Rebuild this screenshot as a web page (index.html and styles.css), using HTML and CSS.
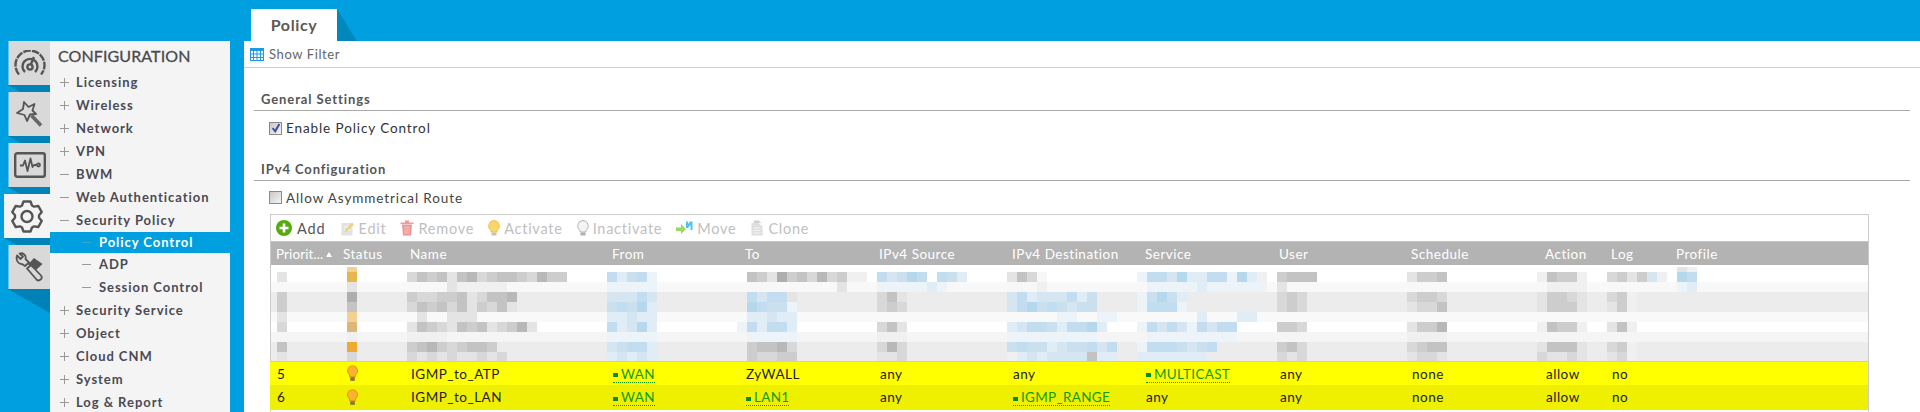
FILE: index.html
```html
<!DOCTYPE html>
<html lang="en">
<head>
<meta charset="utf-8">
<title>Policy Control</title>
<link rel="stylesheet" href="styles.css">
</head>
<body>
<div class="app">
  <header class="topbar">
    <div class="tab">Policy</div>
  </header>
  <div class="body">
    <aside class="rail">
      <div class="rail-item">
        <svg class="ic-gauge" viewBox="0 0 32 26"><path class="ln" d="M5 24.500A14.500 14.500 0 1 1 27 24.500" stroke-dasharray="7.600 1.100"/><path class="ln" d="M11 22A7.500 7.500 0 1 1 21 22"/><circle class="ln" cx="16" cy="17" r="2.600"/><path class="ln" d="M17 14L20 7"/></svg>
      </div>
      <div class="rail-item">
        <svg class="ic-wand" viewBox="0 0 27 27"><path class="ln thin" d="M8 1L12.500 6L18.500 3L16.500 9.500L20 13L14 13.500L11 20L8.500 14L1 12L7 8Z"/><path class="ln thick" d="M15.500 14.500L25 24.500"/></svg>
      </div>
      <div class="rail-item">
        <svg class="ic-mon" viewBox="0 0 32 26"><rect class="ln" x="1.200" y="1.200" width="29.600" height="23.600" rx="2"/><path class="ln thin" d="M6 13.500H9L11 8.500L13.500 19L16.500 6.500L18.500 15L20 13H23"/><circle class="ln thin" cx="24.500" cy="13" r="1.500"/></svg>
      </div>
      <div class="rail-item active">
        <svg class="ic-gear" viewBox="-1 -1 32 33"><path class="ln" d="M11.500 .5L18.500 .5L20 4.500L22.030 5.670L26.250 4.970L29.750 11.030L27.030 14.330L27.030 16.670L29.750 19.970L26.250 26.030L22.030 25.330L20 26.500L18.500 30.500L11.500 30.500L10 26.500L7.970 25.330L3.750 26.030L.25 19.970L2.970 16.670L2.970 14.330L.25 11.030L3.750 4.970L7.970 5.670L10 4.500Z"/><circle class="ln" cx="15" cy="15.500" r="5.500"/></svg>
      </div>
      <div class="rail-item">
        <svg class="ic-tools" viewBox="0 0 29 30"><path class="ln thin" d="M2 3.500L5.500 7L8 4.500L4.500 1.500C8 .5 11.500 3 10.500 7L14 10.500L10 14L7 12C3.500 12.500 .5 8 2 3.500Z"/><path class="fill-dark" d="M13 12.500L19 6L27.500 12L21 18Z"/><path class="ln thin" d="M12 16.500L16 13L26 23.500C28.500 26.500 24 30 21.500 27.500Z"/></svg>
      </div>
    </aside>

    <nav class="nav">
      <div class="nav-title">CONFIGURATION</div>
      <ul class="menu">
        <li class="row"><span class="sign plus"></span>Licensing</li>
        <li class="row"><span class="sign plus"></span>Wireless</li>
        <li class="row"><span class="sign plus"></span>Network</li>
        <li class="row"><span class="sign plus"></span>VPN</li>
        <li class="row"><span class="sign"></span>BWM</li>
        <li class="row"><span class="sign"></span>Web Authentication</li>
        <li class="row"><span class="sign"></span>Security Policy</li>
        <li class="row sub selected"><span class="sign"></span>Policy Control</li>
        <li class="row sub"><span class="sign"></span>ADP</li>
        <li class="row sub"><span class="sign"></span>Session Control</li>
        <li class="row"><span class="sign plus"></span>Security Service</li>
        <li class="row"><span class="sign plus"></span>Object</li>
        <li class="row"><span class="sign plus"></span>Cloud CNM</li>
        <li class="row"><span class="sign plus"></span>System</li>
        <li class="row"><span class="sign plus"></span>Log &amp; Report</li>
      </ul>
    </nav>

    <main class="main">
      <div class="filter-bar">
        <svg class="ic-filter" viewBox="0 0 14 13"><rect x="0.500" y="0.500" width="13" height="12" fill="#fff" stroke="#1d9be0"/><rect x="0" y="0" width="14" height="3" fill="#1d9be0"/><path d="M3.500 3V13M7 3V13M10.500 3V13M0 6H14M0 9.500H14" stroke="#1d9be0"/></svg>
        <span>Show Filter</span>
      </div>

      <section class="section">
        <h3 class="sec-head">General Settings</h3>
        <label class="check-row"><span class="check on"><svg viewBox="0 0 9 9"><path d="M1.500 4.500L3.800 7.500L7.500 1" fill="none" stroke="#3c4fa0" stroke-width="1.800"/></svg></span>Enable Policy Control</label>
      </section>

      <section class="section second">
        <h3 class="sec-head">IPv4 Configuration</h3>
        <label class="check-row short"><span class="check"></span>Allow Asymmetrical Route</label>

        <div class="table-box">
          <div class="toolbar">
            <span class="tool live"><svg class="t-ic" viewBox="0 0 16 16"><circle cx="8" cy="8" r="8" fill="#55ab0e"/><path d="M8 3.500V12.500M3.500 8H12.500" stroke="#fff" stroke-width="2.600"/></svg>Add</span>
            <span class="tool"><svg class="t-ic" viewBox="0 0 14 16"><rect x="0.500" y="3" width="11" height="12.500" fill="#e2e2e2"/><path d="M3 7H9M3 10H9" stroke="#fff"/><path d="M4 10L11 2.500L13 4.500L6 11.500L3.500 12Z" fill="#f1d27a"/></svg>Edit</span>
            <span class="tool"><svg class="t-ic" viewBox="0 0 13 16"><path d="M0 2.500H13V4H0ZM4.500 .5H8.500V2.500H4.500Z" fill="#ee9a9a"/><path d="M1.500 4.500H11.500L10.500 15.500H2.500Z" fill="#f09292"/><path d="M4.500 6V14M6.500 6V14M8.500 6V14" stroke="#f9c4c4"/></svg>Remove</span>
            <span class="tool"><svg class="t-ic bulb" viewBox="0 0 12 17"><path d="M6 .5A5.500 5.500 0 0 1 9 10.500V12H3V10.500A5.500 5.500 0 0 1 6 .5Z" fill="#fbd76b" stroke="#f3bf45"/><rect x="3.500" y="12.500" width="5" height="3" fill="#c4c4b0"/></svg>Activate</span>
            <span class="tool"><svg class="t-ic bulb" viewBox="0 0 12 17"><path d="M6 .5A5.500 5.500 0 0 1 9 10.500V12H3V10.500A5.500 5.500 0 0 1 6 .5Z" fill="#f3f3f3" stroke="#b5b5b5"/><rect x="3.500" y="12.500" width="5" height="3" fill="#b0b0b0"/></svg>Inactivate</span>
            <span class="tool"><svg class="t-ic wide" viewBox="0 0 17 14"><path d="M0 6.500H5V3L10 8L5 13V10H0Z" fill="#9ad765"/><path d="M10 .5H12V3L14 .5H16.500V9H14.500V4L12 7H10Z" fill="#4cc3f5"/></svg>Move</span>
            <span class="tool"><svg class="t-ic" viewBox="0 0 13 16"><path d="M1 3H8L12 6.500V15.500H1Z" fill="#dedede"/><path d="M3.500 .5H8L11 3H3.500Z" fill="#cfcfcf"/><path d="M3 8H10M3 10.500H10M3 13H10" stroke="#f5f5f5"/></svg>Clone</span>
          </div>

          <div class="cols thead">
            <span class="cell"><span class="trim">Priorit...</span><i class="sort"></i></span>
            <span class="cell">Status</span>
            <span class="cell">Name</span>
            <span class="cell">From</span>
            <span class="cell">To</span>
            <span class="cell">IPv4 Source</span>
            <span class="cell">IPv4 Destination</span>
            <span class="cell">Service</span>
            <span class="cell">User</span>
            <span class="cell">Schedule</span>
            <span class="cell">Action</span>
            <span class="cell">Log</span>
            <span class="cell">Profile</span>
          </div>

          <div id="blurred" class="blurred"></div>

          <div class="cols trow hl1">
            <span class="cell">5</span>
            <span class="cell"><svg class="lamp" viewBox="0 0 12 18"><path d="M6 .5A5.500 5.500 0 0 1 9.200 10.500V12.500H2.800V10.500A5.500 5.500 0 0 1 6 .5Z" fill="#fbb32c" stroke="#f08a12"/><rect x="3.500" y="13" width="5" height="4" fill="#7c7a3c"/></svg></span>
            <span class="cell">IGMP_to_ATP</span>
            <span class="cell"><a class="obj"><i class="obj-ic"></i>WAN</a></span>
            <span class="cell">ZyWALL</span>
            <span class="cell">any</span>
            <span class="cell">any</span>
            <span class="cell"><a class="obj"><i class="obj-ic"></i>MULTICAST</a></span>
            <span class="cell">any</span>
            <span class="cell">none</span>
            <span class="cell">allow</span>
            <span class="cell">no</span>
            <span class="cell"></span>
          </div>
          <div class="cols trow hl2">
            <span class="cell">6</span>
            <span class="cell"><svg class="lamp" viewBox="0 0 12 18"><path d="M6 .5A5.500 5.500 0 0 1 9.200 10.500V12.500H2.800V10.500A5.500 5.500 0 0 1 6 .5Z" fill="#fbb32c" stroke="#f08a12"/><rect x="3.500" y="13" width="5" height="4" fill="#7c7a3c"/></svg></span>
            <span class="cell">IGMP_to_LAN</span>
            <span class="cell"><a class="obj"><i class="obj-ic"></i>WAN</a></span>
            <span class="cell"><a class="obj"><i class="obj-ic"></i>LAN1</a></span>
            <span class="cell">any</span>
            <span class="cell"><a class="obj"><i class="obj-ic"></i>IGMP_RANGE</a></span>
            <span class="cell">any</span>
            <span class="cell">any</span>
            <span class="cell">none</span>
            <span class="cell">allow</span>
            <span class="cell">no</span>
            <span class="cell"></span>
          </div>
        </div>
      </section>
    </main>
  </div>
</div>
<script src="mosaic.js"></script>
</body>
</html>
```
FILE: styles.css
```css
* { box-sizing: border-box; }
html, body { margin: 0; padding: 0; height: 412px; overflow: hidden; }
body {
  background: #009fdf;
  font-family: Lato, "Open Sans", sans-serif;
  font-size: 14px;
  color: #333;
}
.app { width: 1920px; height: 412px; overflow: hidden; }

/* top */
.topbar { height: 41px; padding: 9px 0 0 251px; }
.tab {
  position: relative;
  width: 86px; height: 32px;
  background: #fff;
  color: #60584f;
  font-size: 16px; font-weight: 700;
  letter-spacing: .6px;
  line-height: 31px;
  text-align: center;
}
.tab::after {
  content: "";
  position: absolute; left: 100%; top: 0;
  width: 20px; height: 32px;
  background: #0088bd;
  clip-path: polygon(0 0, 100% 100%, 0 100%);
}

.body { display: flex; height: 371px; }

/* icon rail */
.rail { width: 50px; flex: none; }
.rail-item {
  position: relative;
  margin: 0 0 7px 8px;
  width: 42px; height: 44px;
  background: #d9d9d9;
  border-left: 1px solid #66bfe8;
  display: flex; align-items: center; justify-content: center;
}
.rail-item::after {
  content: "";
  position: absolute; left: -1px; top: 100%;
  width: 42px; height: 24px;
  background: #0082b8;
  clip-path: polygon(0 0, 100% 0, 100% 100%);
  z-index: 0;
}
.rail-item + .rail-item { z-index: 1; }
.rail-item.active {
  width: 46px; margin-left: 4px;
  background: #f4f4f4;
  border-left: 0;
}
.rail-item.active::after { left: 0; width: 46px; }
.rail-item svg { display: block; }
.ln { fill: none; stroke: #555; stroke-width: 2.4; stroke-linejoin: round; }
.ln.thin { stroke-width: 1.8; }
.ln.thick { stroke-width: 3.6; stroke: #666; }
.fill-dark { fill: #555; }
.ic-gauge { width: 32px; height: 26px; }
.ic-wand { width: 27px; height: 27px; }
.ic-mon { width: 32px; height: 26px; }
.ic-gear { width: 32px; height: 33px; }
.ic-tools { width: 29px; height: 30px; }

/* nav */
.nav {
  width: 180px; flex: none;
  margin-right: 14px;
  background: #f4f4f4;
  color: #4a4a55;
  font-weight: 700;
}
.nav-title {
  height: 30px; line-height: 29px;
  padding-left: 8px;
  font-size: 16px; font-weight: 400;
  letter-spacing: .1px;
  color: #4a4a4a;
  -webkit-text-stroke: .3px #4a4a4a;
}
.menu { list-style: none; margin: 0; padding: 0; }
.row {
  height: 23px;
  display: flex; align-items: center;
  padding-left: 10px;
  padding-bottom: 1px;
  font-size: 13px;
  letter-spacing: .95px;
  white-space: nowrap;
}
.sign {
  position: relative;
  flex: none;
  width: 9px; height: 9px;
  margin-right: 7px;
  background: linear-gradient(#999, #999) center / 9px 1px no-repeat;
}
.sign.plus::after {
  content: "";
  position: absolute; left: 4px; top: 0;
  width: 1px; height: 9px;
  background: #999;
}
.row.sub { padding-left: 32px; }
.row.sub .sign { margin-right: 8px; }
.row.selected {
  height: 21px;
  background: #009fdf;
  color: #fff;
}
.row.selected .sign { background-image: linear-gradient(#3aa6d6, #3aa6d6); }

/* main */
.main { flex: 1; min-width: 0; background: #fff; }
.filter-bar {
  height: 27px;
  border-bottom: 1px solid #ccc;
  padding-left: 6px;
  display: flex; align-items: center; gap: 5px;
  font-size: 13px;
  letter-spacing: .6px;
  color: #666;
}
.ic-filter { width: 14px; height: 13px; }

.section { margin: 20px 10px 0 10px; }
.section.second { margin-top: 13px; margin-right: 10px; }
.sec-head {
  margin: 0;
  height: 23px;
  padding-left: 7px;
  border-bottom: 1px solid #aaa;
  font-size: 13px; font-weight: 700;
  line-height: 22px;
  letter-spacing: .9px;
  color: #555;
}
.check-row {
  display: flex; align-items: center;
  height: 34px;
  padding-left: 15px;
  font-size: 13.500px;
  letter-spacing: .9px;
  color: #333;
}
.check-row.short { height: 33px; color: #444; }
.check {
  width: 13px; height: 13px;
  margin-right: 4px;
  border: 1px solid #8a8a8a;
  background: linear-gradient(135deg, #c8c8c8, #f4f4f4);
  display: flex; align-items: center; justify-content: center;
}
.check svg { width: 10px; height: 10px; }

/* table */
.table-box {
  margin: 0 41px 0 16px;
  border: 1px solid #ccc;
  border-bottom: 0;
  padding-bottom: 20px;
}
.toolbar {
  height: 26px;
  display: flex; align-items: center; gap: 14px;
  padding-left: 5px;
  font-size: 14.500px;
  letter-spacing: .75px;
  color: #c0c0c0;
  white-space: nowrap;
}
.tool { display: flex; align-items: center; gap: 4px; }
.tool.live { color: #555; gap: 5px; letter-spacing: .9px; margin-right: 1px; }
.t-ic { width: 14px; height: 16px; flex: none; }
.t-ic.bulb { width: 12px; height: 17px; }
.t-ic.wide { width: 17px; height: 14px; }
.toolbar .live .t-ic { width: 16px; }

.cols {
  display: grid;
  grid-template-columns: 67px 67px 202px 133px 134px 133px 133px 134px 132px 134px 66px 65px 1fr;
  align-items: center;
  white-space: nowrap;
}
.cell { padding-left: 5px; display: block; min-width: 0; }
.thead {
  height: 24px;
  background: #b3b3b3;
  border-top: 1px solid #c4c4c4;
  color: #fff;
  font-size: 13.500px;
  letter-spacing: .5px;
}
.trim { letter-spacing: .1px; }
.sort {
  display: inline-block;
  margin-left: 3px;
  border: 3.500px solid transparent;
  border-top: 0;
  border-bottom: 5px solid #fff;
  vertical-align: 2px;
}

.blurred { padding-top: 2px; background: #fff; }
.band {
  display: grid;
  grid-template-columns: repeat(160, 10px);
  grid-auto-rows: 100%;
  padding-left: 6px;
  overflow: hidden;
}
.band span { display: block; height: 100%; }

.trow {
  margin: 0 0 0 -1px;
  font-size: 13.500px;
  letter-spacing: .5px;
  color: #222;
}
.trow .cell { padding-left: 7px; }
.hl1 { height: 24px; background: #ff0; border-top: 1px solid #e6e600; }
.hl2 { height: 25px; background: #efef00; padding-bottom: 1px; }
.lamp { display: block; width: 11px; height: 17px; margin-left: 3px; }
.obj {
  display: inline-flex; align-items: center;
  border-bottom: 1px dotted #0a9a0a;
  color: #129a12;
  line-height: 16px;
  letter-spacing: .3px;
}
.obj-ic {
  width: 5px; height: 4px;
  margin-right: 3px;
  margin-top: 3px;
  background: #0a8a2a;
}
```
FILE: mosaic.js
```js
// Blurred-out firewall rules: each band is a 10px strip of pixelated cells.
var PALETTE = {
  '0': '#f7f7f7', '1': '#f0f0f0', '2': '#e4e4e4', '3': '#d8d8d8', '4': '#cdcdcd',
  '5': '#c3c3c3', '6': '#b8b8b8', '7': '#aeaeae',
  a: '#edf4f9', b: '#e0ecf6', c: '#d5e5f1', d: '#cbe0ef', e: '#c2dcf0', f: '#b5d8ec',
  o: '#e8b64e', p: '#f3d193', q: '#ddb777', r: '#eeaa30'
};
var BANDS = [
  ['#ffffff', 5, [[7,'p'],[140,'21']]],
  ['#ffffff', 10, [[0,'2'],[7,'o'],[13,'3545256345543644'],[33,'ebdea'],[47,'542745363411'],[60,'ecdfe.edb'],[73,'2530'],[86,'aeecfbbeeafb1'],[100,'4555'],[113,'2445'],[126,'15441'],[133,'3424c1'],[140,'fe']]],
  ['#f8f8f8', 10, [[7,'2'],[17,'211111'],[33,'aaaaa'],[47,'00'],[56,'2'],[60,'aaaaaba'],[73,'0001'],[87,'aaaaabaaaaaa'],[100,'2'],[127,'1111'],[140,'ab']]],
  ['#ececec', 10, [[0,'4'],[7,'7'],[13,'43344523556'],[33,'cccec'],[47,'ecee2'],[60,'352'],[73,'cebcccebd'],[86,'adfdb'],[100,'343'],[113,'3443'],[126,'24432'],[133,'341']]],
  ['#ececec', 10, [[0,'4'],[7,'5'],[13,'35453524352'],[33,'dedfb'],[47,'fedda'],[60,'343'],[73,'cefdedcdd'],[86,'aeeea'],[100,'343'],[113,'2335'],[126,'24442'],[133,'241']]],
  ['#f9f9f9', 10, [[0,'2'],[7,'p'],[14,'2'],[17,'222'],[33,'bbcbb'],[47,'bbcbb'],[78,'aa'],[82,'aa'],[92,'b'],[96,'bb']]],
  ['#ffffff', 10, [[0,'3'],[7,'q'],[13,'2543254523462'],[33,'ebcfb'],[46,'aebeeb'],[60,'352'],[73,'bceedbeefb'],[86,'a'],[87,'ececaecee'],[100,'443'],[113,'2446'],[126,'15441'],[133,'251']]],
  ['#f5f5f5', 10, [[7,'1'],[13,'1111'],[33,'aaaaa'],[47,'aaaaa'],[60,'111'],[73,'aaaaaaaaa'],[87,'aaaaaaaaa'],[113,'1111']]],
  ['#ececec', 10, [[0,'5'],[7,'r'],[13,'456434554'],[33,'cdeeb'],[47,'45563'],[60,'363'],[73,'deddbcddece'],[86,'a'],[87,'eeedcde'],[100,'453'],[113,'3455'],[126,'25552'],[133,'341']]],
  ['#ececec', 9, [[0,'2'],[7,'3'],[13,'3232322323'],[33,'bcbcb'],[47,'43344'],[60,'223'],[73,'1bcbcccc5bb'],[86,'bbbbbbb'],[100,'323'],[113,'2332'],[126,'32232'],[133,'231']]]
];
var host = document.getElementById('blurred');
BANDS.forEach(function (band) {
  var strip = document.createElement('div');
  strip.className = 'band';
  strip.style.background = band[0];
  strip.style.height = band[1] + 'px';
  band[2].forEach(function (seg) {
    seg[1].split('').forEach(function (ch, i) {
      if (ch === '.') return;
      var cell = document.createElement('span');
      cell.style.gridColumnStart = seg[0] + i + 1;
      cell.style.gridRowStart = 1;
      cell.style.background = PALETTE[ch];
      strip.appendChild(cell);
    });
  });
  host.appendChild(strip);
});
```
